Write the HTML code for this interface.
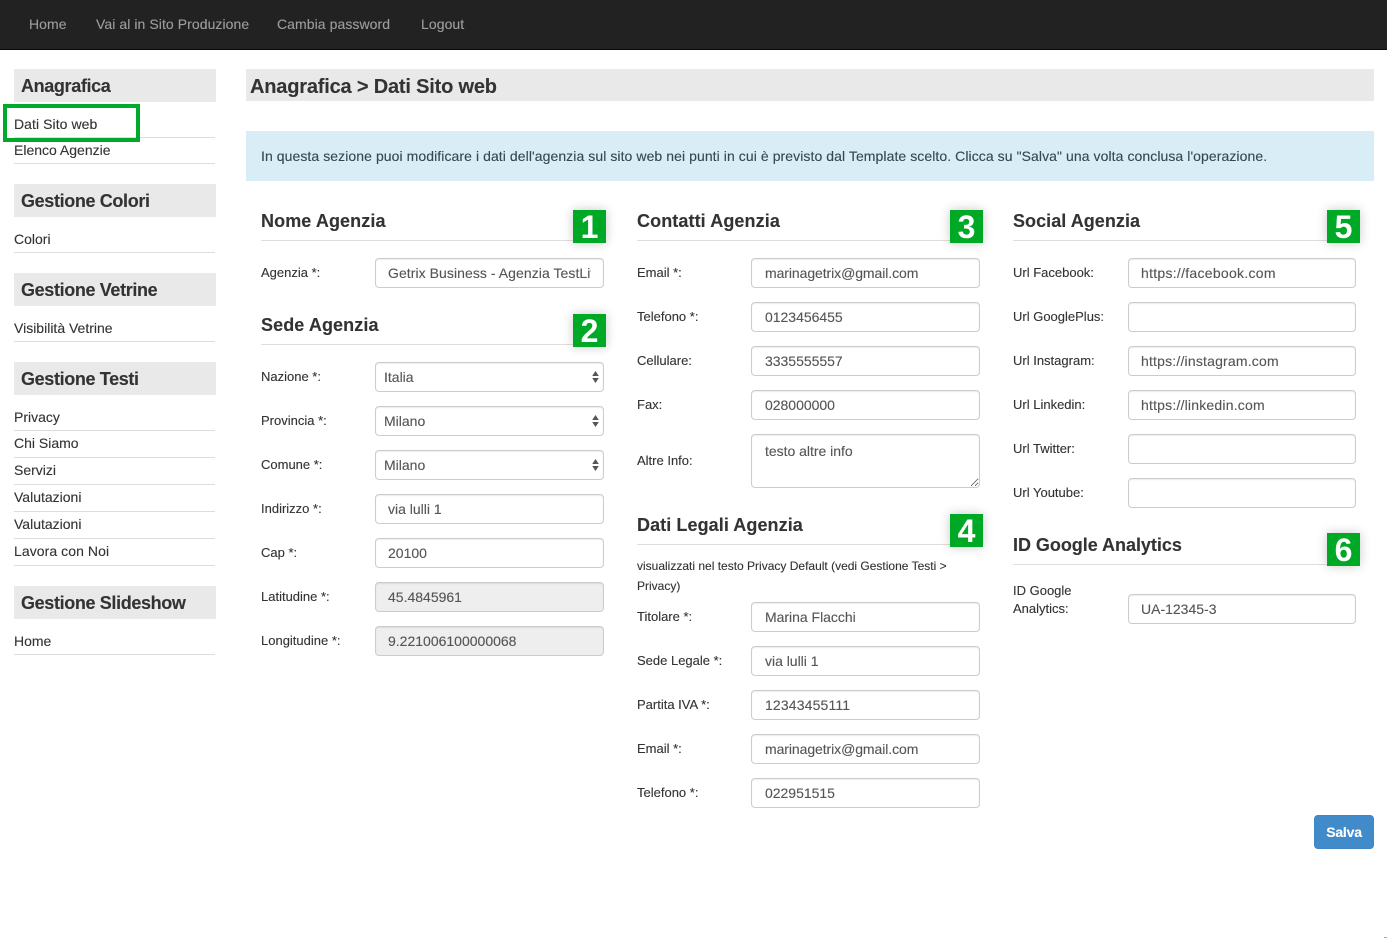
<!DOCTYPE html>
<html lang="it"><head><meta charset="utf-8"><title>Anagrafica</title>
<style>
*{box-sizing:border-box}
html,body{margin:0;padding:0;background:#fff}
body{position:relative;width:1387px;height:938px;overflow:hidden;font-family:"Liberation Sans",Arial,sans-serif;color:#333;font-size:14px;-webkit-text-stroke:.12px}
.a{position:absolute;white-space:nowrap}
.nav{position:absolute;left:0;top:0;width:1387px;height:50px;background:#222;border-bottom:1px solid #080808}
.n{position:absolute;top:14px;line-height:20px;color:#9d9d9d;font-size:14px;white-space:nowrap;letter-spacing:.07px}
.sh{position:absolute;left:14px;width:202px;height:33px;background:#e9e9e9;font-size:18px;font-weight:bold;line-height:35px;padding-left:7px;color:#333;letter-spacing:-.36px;white-space:nowrap}
.sl{position:absolute;left:14px;line-height:20px;font-size:14px;color:#333;white-space:nowrap}
.ln{position:absolute;height:1px;background:#ddd}
.h{position:absolute;font-size:18px;font-weight:bold;line-height:24px;color:#333;white-space:nowrap;letter-spacing:.05px}
.l{position:absolute;font-size:13px;line-height:18px;color:#333;white-space:nowrap;margin-top:1px}
input,select,textarea{position:absolute;height:30px;border:1px solid #ccc;border-radius:4px;background:#fff;color:#555;font:14px/20px "Liberation Sans",Arial,sans-serif;padding:0 12px;box-shadow:inset 0 1px 1px rgba(0,0,0,.075);margin:0;outline:0;-webkit-text-stroke:.12px}
select{appearance:none;-webkit-appearance:none;padding:0 8px}
input[disabled]{background:#eee;color:#555;-webkit-text-fill-color:#555;opacity:1}
textarea{padding:6px 13px;height:54px;resize:vertical}
.c1{left:375px;width:229px}.c2{left:751px;width:229px;padding-left:13px;letter-spacing:-.02px}.c3{left:1128px;width:228px}
.b{position:absolute;width:33px;height:33px;background:#00a925;color:#fff;font-size:32px;font-weight:bold;line-height:34px;text-align:center;box-shadow:0 0 10px rgba(0,0,0,.22);-webkit-text-stroke:0}
.arr{position:absolute;width:7px;height:12px}
</style></head><body>
<div class="nav"></div>
<div class="n" style="left:29px">Home</div>
<div class="n" style="left:96px">Vai al in Sito Produzione</div>
<div class="n" style="left:277px">Cambia password</div>
<div class="n" style="left:421px">Logout</div>

<div class="sh" style="top:69px">Anagrafica</div>
<div class="sl" style="top:114px;letter-spacing:.07px">Dati Sito web</div><div class="ln" style="left:14px;width:201px;top:137px"></div>
<div class="sl" style="top:140px">Elenco Agenzie</div><div class="ln" style="left:14px;width:201px;top:163px"></div>
<div class="a" style="left:3px;top:104px;width:137px;height:38px;border:4px solid #00a92b"></div>
<div class="sh" style="top:184px">Gestione Colori</div>
<div class="sl" style="top:229px">Colori</div><div class="ln" style="left:14px;width:201px;top:252px"></div>
<div class="sh" style="top:273px">Gestione Vetrine</div>
<div class="sl" style="top:318px">Visibilità Vetrine</div><div class="ln" style="left:14px;width:201px;top:341px"></div>
<div class="sh" style="top:362px">Gestione Testi</div>
<div class="sl" style="top:407px">Privacy</div><div class="ln" style="left:14px;width:201px;top:430px"></div>
<div class="sl" style="top:433px">Chi Siamo</div><div class="ln" style="left:14px;width:201px;top:457px"></div>
<div class="sl" style="top:460px">Servizi</div><div class="ln" style="left:14px;width:201px;top:484px"></div>
<div class="sl" style="top:487px">Valutazioni</div><div class="ln" style="left:14px;width:201px;top:511px"></div>
<div class="sl" style="top:514px">Valutazioni</div><div class="ln" style="left:14px;width:201px;top:538px"></div>
<div class="sl" style="top:541px;letter-spacing:.07px">Lavora con Noi</div><div class="ln" style="left:14px;width:201px;top:565px"></div>
<div class="sh" style="top:586px">Gestione Slideshow</div>
<div class="sl" style="top:631px">Home</div><div class="ln" style="left:14px;width:201px;top:654px"></div>

<div class="a" style="left:246px;top:69px;width:1128px;height:32px;background:#e9e9e9;font-size:20px;font-weight:bold;line-height:36px;padding-left:4px;letter-spacing:-.19px">Anagrafica &gt; Dati Sito web</div>
<div class="a" style="left:246px;top:131px;width:1128px;height:50px;background:#d9edf7;color:#36474f;line-height:50px;padding-left:15px;font-size:14px;letter-spacing:.073px">In questa sezione puoi modificare i dati dell'agenzia sul sito web nei punti in cui è previsto dal Template scelto. Clicca su "Salva" una volta conclusa l'operazione.</div>

<div class="h" style="left:261px;top:209px;letter-spacing:.1px">Nome Agenzia</div><div class="ln" style="left:261px;width:343px;top:240px"></div>
<div class="l" style="left:261px;top:263px">Agenzia *:</div><input class="c1" style="top:258px;letter-spacing:.06px" value="Getrix Business - Agenzia TestLive">
<div class="h" style="left:261px;top:313px;letter-spacing:.1px">Sede Agenzia</div><div class="ln" style="left:261px;width:343px;top:344px"></div>
<div class="l" style="left:261px;top:367px">Nazione *:</div><select class="c1" style="top:362px"><option>Italia</option></select>
<div class="l" style="left:261px;top:411px">Provincia *:</div><select class="c1" style="top:406px"><option>Milano</option></select>
<div class="l" style="left:261px;top:455px">Comune *:</div><select class="c1" style="top:450px"><option>Milano</option></select>
<svg class="arr" style="left:592px;top:371px" viewBox="0 0 7 12"><path d="M3.5 0L6.8 5H.2zM3.5 12L.2 7H6.8z" fill="#555"/></svg>
<svg class="arr" style="left:592px;top:415px" viewBox="0 0 7 12"><path d="M3.5 0L6.8 5H.2zM3.5 12L.2 7H6.8z" fill="#555"/></svg>
<svg class="arr" style="left:592px;top:459px" viewBox="0 0 7 12"><path d="M3.5 0L6.8 5H.2zM3.5 12L.2 7H6.8z" fill="#555"/></svg>
<div class="l" style="left:261px;top:499px">Indirizzo *:</div><input class="c1" style="top:494px" value="via lulli 1">
<div class="l" style="left:261px;top:543px">Cap *:</div><input class="c1" style="top:538px" value="20100">
<div class="l" style="left:261px;top:587px">Latitudine *:</div><input class="c1" style="top:582px" disabled value="45.4845961">
<div class="l" style="left:261px;top:631px">Longitudine *:</div><input class="c1" style="top:626px" disabled value="9.221006100000068">

<div class="h" style="left:637px;top:209px;letter-spacing:.1px">Contatti Agenzia</div><div class="ln" style="left:637px;width:343px;top:240px"></div>
<div class="l" style="left:637px;top:263px">Email *:</div><input class="c2" style="top:258px;letter-spacing:-.08px" value="marinagetrix@gmail.com">
<div class="l" style="left:637px;top:307px">Telefono *:</div><input class="c2" style="top:302px" value="0123456455">
<div class="l" style="left:637px;top:351px">Cellulare:</div><input class="c2" style="top:346px" value="3335555557">
<div class="l" style="left:637px;top:395px">Fax:</div><input class="c2" style="top:390px" value="028000000">
<div class="l" style="left:637px;top:451px">Altre Info:</div><textarea class="c2" style="top:434px">testo altre info</textarea>
<div class="h" style="left:637px;top:513px;letter-spacing:.08px">Dati Legali Agenzia</div><div class="ln" style="left:637px;width:343px;top:544px"></div>
<div class="l" style="left:637px;top:556px;font-size:12px">visualizzati nel testo Privacy Default (vedi Gestione Testi &gt;</div>
<div class="l" style="left:637px;top:576px;font-size:12px">Privacy)</div>
<div class="l" style="left:637px;top:607px">Titolare *:</div><input class="c2" style="top:602px" value="Marina Flacchi">
<div class="l" style="left:637px;top:651px">Sede Legale *:</div><input class="c2" style="top:646px" value="via lulli 1">
<div class="l" style="left:637px;top:695px">Partita IVA *:</div><input class="c2" style="top:690px;letter-spacing:.15px" value="12343455111">
<div class="l" style="left:637px;top:739px">Email *:</div><input class="c2" style="top:734px;letter-spacing:-.08px" value="marinagetrix@gmail.com">
<div class="l" style="left:637px;top:783px">Telefono *:</div><input class="c2" style="top:778px" value="022951515">

<div class="h" style="left:1013px;top:209px">Social Agenzia</div><div class="ln" style="left:1013px;width:343px;top:240px"></div>
<div class="l" style="left:1013px;top:263px">Url Facebook:</div><input class="c3" style="top:258px;letter-spacing:.28px" value="https://facebook.com">
<div class="l" style="left:1013px;top:307px">Url GooglePlus:</div><input class="c3" style="top:302px">
<div class="l" style="left:1013px;top:351px">Url Instagram:</div><input class="c3" style="top:346px;letter-spacing:.19px" value="https://instagram.com">
<div class="l" style="left:1013px;top:395px">Url Linkedin:</div><input class="c3" style="top:390px;letter-spacing:.2px" value="https://linkedin.com">
<div class="l" style="left:1013px;top:439px">Url Twitter:</div><input class="c3" style="top:434px">
<div class="l" style="left:1013px;top:483px">Url Youtube:</div><input class="c3" style="top:478px">
<div class="h" style="left:1013px;top:533px;letter-spacing:-.03px">ID Google Analytics</div><div class="ln" style="left:1013px;width:343px;top:564px"></div>
<div class="l" style="left:1013px;top:581px">ID Google</div><div class="l" style="left:1013px;top:599px">Analytics:</div>
<input class="c3" style="top:594px" value="UA-12345-3">

<div class="b" style="left:573px;top:210px">1</div>
<div class="b" style="left:573px;top:314px">2</div>
<div class="b" style="left:950px;top:210px">3</div>
<div class="b" style="left:950px;top:514px">4</div>
<div class="b" style="left:1327px;top:210px">5</div>
<div class="b" style="left:1327px;top:533px">6</div>

<div class="a" style="left:1314px;top:815px;width:60px;height:34px;background:#428bca;border:1px solid #3f86c4;border-radius:4px;color:#fff;font-weight:bold;font-size:14px;line-height:32px;text-align:center;letter-spacing:-.2px">Salva</div>
<div class="a" style="left:1384px;top:937px;width:3px;height:1px;background:#aaa"></div>
</body></html>
